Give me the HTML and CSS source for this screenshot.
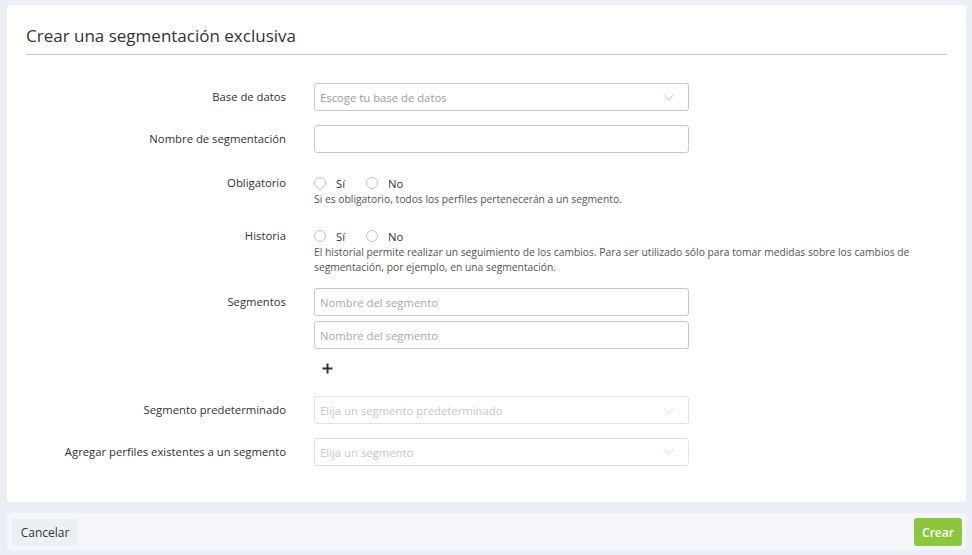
FILE: index.html
```html
<!DOCTYPE html>
<html lang="es">
<head>
<meta charset="utf-8">
<title>Crear una segmentación exclusiva</title>
<link rel="stylesheet" href="styles.css">
</head>
<body>
<div class="page">
  <div class="card">
    <h1 class="title">Crear una segmentación exclusiva</h1>
    <div class="form">
      <div class="row row-db">
        <div class="label">Base de datos</div>
        <div class="control">
          <div class="select">
            <span class="placeholder">Escoge tu base de datos</span>
            <svg class="chev" width="11" height="7" viewBox="0 0 11 7"><path d="M0.5 0.8 L5.5 5.8 L10.5 0.8" fill="none" stroke="#c4c4c4" stroke-width="1"/></svg>
          </div>
        </div>
      </div>
      <div class="row row-name">
        <div class="label">Nombre de segmentación</div>
        <div class="control"><div class="input"></div></div>
      </div>
      <div class="row row-radio row-oblig">
        <div class="label label-radio">Obligatorio</div>
        <div class="control">
          <div class="radios">
            <span class="radio"><span class="circle"></span>Sí</span>
            <span class="radio"><span class="circle"></span>No</span>
          </div>
          <p class="help">Si es obligatorio, todos los perfiles pertenecerán a un segmento.</p>
        </div>
      </div>
      <div class="row row-radio row-hist">
        <div class="label label-radio">Historia</div>
        <div class="control">
          <div class="radios">
            <span class="radio"><span class="circle"></span>Sí</span>
            <span class="radio"><span class="circle"></span>No</span>
          </div>
          <p class="help">El historial permite realizar un seguimiento de los cambios. Para ser utilizado sólo para tomar medidas sobre los cambios de segmentación, por ejemplo, en una segmentación.</p>
        </div>
      </div>
      <div class="row row-seg">
        <div class="label">Segmentos</div>
        <div class="control">
          <div class="input"><span class="placeholder">Nombre del segmento</span></div>
          <div class="input input-2"><span class="placeholder">Nombre del segmento</span></div>
          <div class="plus">
            <svg width="11" height="11" viewBox="0 0 11 11"><path d="M5.5 0.5 V10.5 M0.5 5.5 H10.5" stroke="#333" stroke-width="2"/></svg>
          </div>
        </div>
      </div>
      <div class="row row-def">
        <div class="label">Segmento predeterminado</div>
        <div class="control">
          <div class="select disabled">
            <span class="placeholder">Elija un segmento predeterminado</span>
            <svg class="chev" width="11" height="7" viewBox="0 0 11 7"><path d="M0.5 0.8 L5.5 5.8 L10.5 0.8" fill="none" stroke="#d8d8d8" stroke-width="1"/></svg>
          </div>
        </div>
      </div>
      <div class="row row-add">
        <div class="label">Agregar perfiles existentes a un segmento</div>
        <div class="control">
          <div class="select disabled">
            <span class="placeholder">Elija un segmento</span>
            <svg class="chev" width="11" height="7" viewBox="0 0 11 7"><path d="M0.5 0.8 L5.5 5.8 L10.5 0.8" fill="none" stroke="#d8d8d8" stroke-width="1"/></svg>
          </div>
        </div>
      </div>
    </div>
  </div>
  <div class="footer">
    <button class="btn btn-cancel">Cancelar</button>
    <button class="btn btn-create">Crear</button>
  </div>
</div>
</body>
</html>
```
FILE: styles.css
```css
* { box-sizing: border-box; }
html, body { margin: 0; padding: 0; }
body {
  background: #eaeff6;
  font-family: "Open Sans", "Noto Sans", sans-serif;
  color: #333;
  width: 972px;
  height: 555px;
  overflow: hidden;
}
.page {
  padding: 5px 6px 0 7px;
}
.card {
  background: #fff;
  border-radius: 3px;
  padding: 19px 19px 36px 19px;
  height: 497px;
}
.title {
  margin: 0;
  font-size: 17px;
  font-weight: 400;
  line-height: 24px;
  color: #333;
  padding: 0 0 5px 0;
  border-bottom: 1px solid #c9c9c9;
  height: 31px;
}
.form {
  padding-top: 28px;
}
.row {
  display: grid;
  grid-template-columns: 260px 375px;
  column-gap: 28px;
  align-items: start;
}
.label {
  text-align: right;
  font-size: 11.3px;
  line-height: 28px;
  height: 28px;
  color: #333;
}
.label-radio { line-height: 18px; height: 18px; }
.row-name { margin-top: 14px; }
.row-oblig { margin-top: 21px; }
.row-hist { margin-top: 20px; }
.row-seg { margin-top: 13px; }
.row-def { margin-top: 9px; }
.row-add { margin-top: 14px; }
.row-radio { grid-template-columns: 260px 633px; }
.input, .select {
  height: 28px;
  border: 1px solid #c8c8c8;
  border-radius: 3px;
  background: #fff;
  display: flex;
  align-items: center;
  padding: 0 5px;
  font-size: 11.3px;
}
.input-2 { margin-top: 5px; }
.placeholder { color: #aaa; }
.select { justify-content: space-between; padding-right: 14px; }
.select .placeholder { color: #9c9c9c; }
.select.disabled { border-color: #e2e2e2; }
.select.disabled .placeholder { color: #c8c8c8; }
.chev { display: block; }
.radios {
  display: flex;
  height: 18px;
  align-items: center;
  font-size: 11.3px;
}
.radio {
  display: flex;
  align-items: center;
  margin-right: 21px;
}
.circle {
  width: 12px;
  height: 12px;
  border: 1px solid #c4c4c4;
  border-radius: 50%;
  margin-right: 10px;
  background: #fff;
}
.help {
  margin: 0;
  font-size: 10.3px;
  line-height: 15px;
  color: #555;
}
.plus {
  height: 38px;
  padding-left: 8px;
  display: flex;
  align-items: center;
}
.plus svg { display: block; }
.footer {
  margin-top: 11px;
  background: #f4f6fa;
  height: 37px;
  border-radius: 3px;
  padding: 5px 4px 0 5px;
  display: flex;
  justify-content: space-between;
  align-items: flex-start;
}
.btn {
  font-family: "Open Sans", "Noto Sans", sans-serif;
  font-size: 12px;
  height: 28px;
  border: none;
  border-radius: 3px;
  cursor: pointer;
}
.btn-cancel {
  background: #eceff3;
  color: #333;
  width: 66px;
}
.btn-create {
  background: #8cc63f;
  color: #fff;
  width: 48px;
  font-weight: 600;
}
```
